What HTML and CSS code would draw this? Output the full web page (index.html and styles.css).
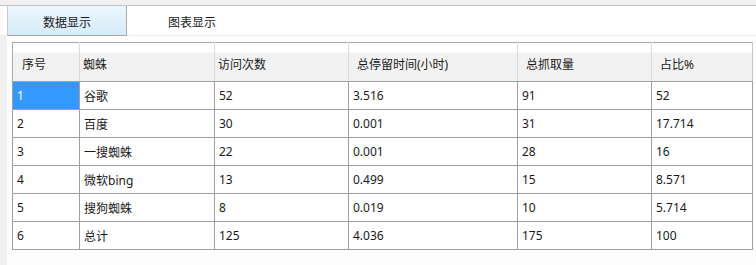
FILE: index.html
```html
<!DOCTYPE html>
<html lang="zh">
<head>
<meta charset="utf-8">
<title>蜘蛛统计</title>
<link rel="stylesheet" href="styles.css">
</head>
<body>
<div class="app">
  <div class="topstrip"></div>
  <div class="tabs">
    <div class="tab active">数据显示</div>
    <div class="tab">图表显示</div>
  </div>
  <div class="content">
    <table class="grid">
      <colgroup>
        <col class="c1"><col class="c2"><col class="c3"><col class="c4"><col class="c5"><col class="c6">
      </colgroup>
      <thead>
        <tr>
          <th class="first">序号</th>
          <th class="narrow">蜘蛛</th>
          <th class="narrow">访问次数</th>
          <th>总停留时间(小时)</th>
          <th>总抓取量</th>
          <th>占比%</th>
        </tr>
      </thead>
      <tbody>
        <tr><td class="sel">1</td><td>谷歌</td><td>52</td><td>3.516</td><td>91</td><td>52</td></tr>
        <tr><td>2</td><td>百度</td><td>30</td><td>0.001</td><td>31</td><td>17.714</td></tr>
        <tr><td>3</td><td>一搜蜘蛛</td><td>22</td><td>0.001</td><td>28</td><td>16</td></tr>
        <tr><td>4</td><td>微软bing</td><td>13</td><td>0.499</td><td>15</td><td>8.571</td></tr>
        <tr><td>5</td><td>搜狗蜘蛛</td><td>8</td><td>0.019</td><td>10</td><td>5.714</td></tr>
        <tr><td>6</td><td>总计</td><td>125</td><td>4.036</td><td>175</td><td>100</td></tr>
      </tbody>
    </table>
  </div>
</div>
</body>
</html>
```
FILE: styles.css
```css
html, body {
  margin: 0;
  padding: 0;
  background: #ffffff;
}
body {
  font-family: "Noto Sans", "Noto Sans CJK SC", sans-serif;
  font-size: 12px;
  color: #1a1a1a;
}
.app {
  width: 756px;
  height: 265px;
  overflow: hidden;
  display: flex;
  flex-direction: column;
}
.topstrip {
  height: 5px;
  background: #f0f0f0;
  border-bottom: 1px solid #c4c4c4;
}
.tabs {
  display: flex;
  height: 29px;
  padding-left: 7px;
  background: #ffffff;
  border-bottom: 1px solid #ececec;
}
.tab {
  width: 120px;
  box-sizing: border-box;
  display: flex;
  align-items: center;
  justify-content: center;
  line-height: 1;
  padding-top: 4px;
  color: #1a1a1a;
}
.tab.active {
  background: linear-gradient(#ecf6fd, #d6ecf9);
  border-left: 1px solid #c8c8c8;
  border-right: 1px solid #a8a8a8;
  border-bottom: 1px solid #a8a8a8;
  height: 30px;
}
.tab + .tab {
  width: 130px;
}
.content {
  flex: 1;
  display: flex;
  align-items: flex-start;
  padding: 6px 0 0 12px;
  background: linear-gradient(90deg, #f1f1f1 0, #f1f1f1 7px, #fdfdfd 7px);
}
.grid {
  border-collapse: collapse;
  width: 740px;
  table-layout: fixed;
  background: #ffffff;
}
.c1 { width: 67px; }
.c2 { width: 135px; }
.c3 { width: 134px; }
.c4 { width: 169px; }
.c5 { width: 134px; }
.c6 { width: 101px; }
.grid th {
  height: 35px;
  padding: 3px 0 0 8px;
  text-align: left;
  font-weight: normal;
  background: linear-gradient(#ffffff 0, #ffffff 9px, #f2f2f2 9px);
  border-top: 1px solid #a9a9a9;
  border-bottom: 1px solid #a0a0a0;
  border-right: 1px solid #dcdcdc;
  white-space: nowrap;
}
.grid th.first {
  padding-left: 9px;
  border-left: 1px solid #a9a9a9;
}
.grid th.narrow {
  padding-left: 3px;
}
.grid th:last-child {
  border-right: 1px solid #c8c8c8;
}
.grid td {
  height: 27px;
  padding: 0 0 0 4px;
  border: 1px solid #a0a0a0;
  white-space: nowrap;
}
.grid td.sel {
  background: #3399ff;
  color: #ffffff;
}
```
